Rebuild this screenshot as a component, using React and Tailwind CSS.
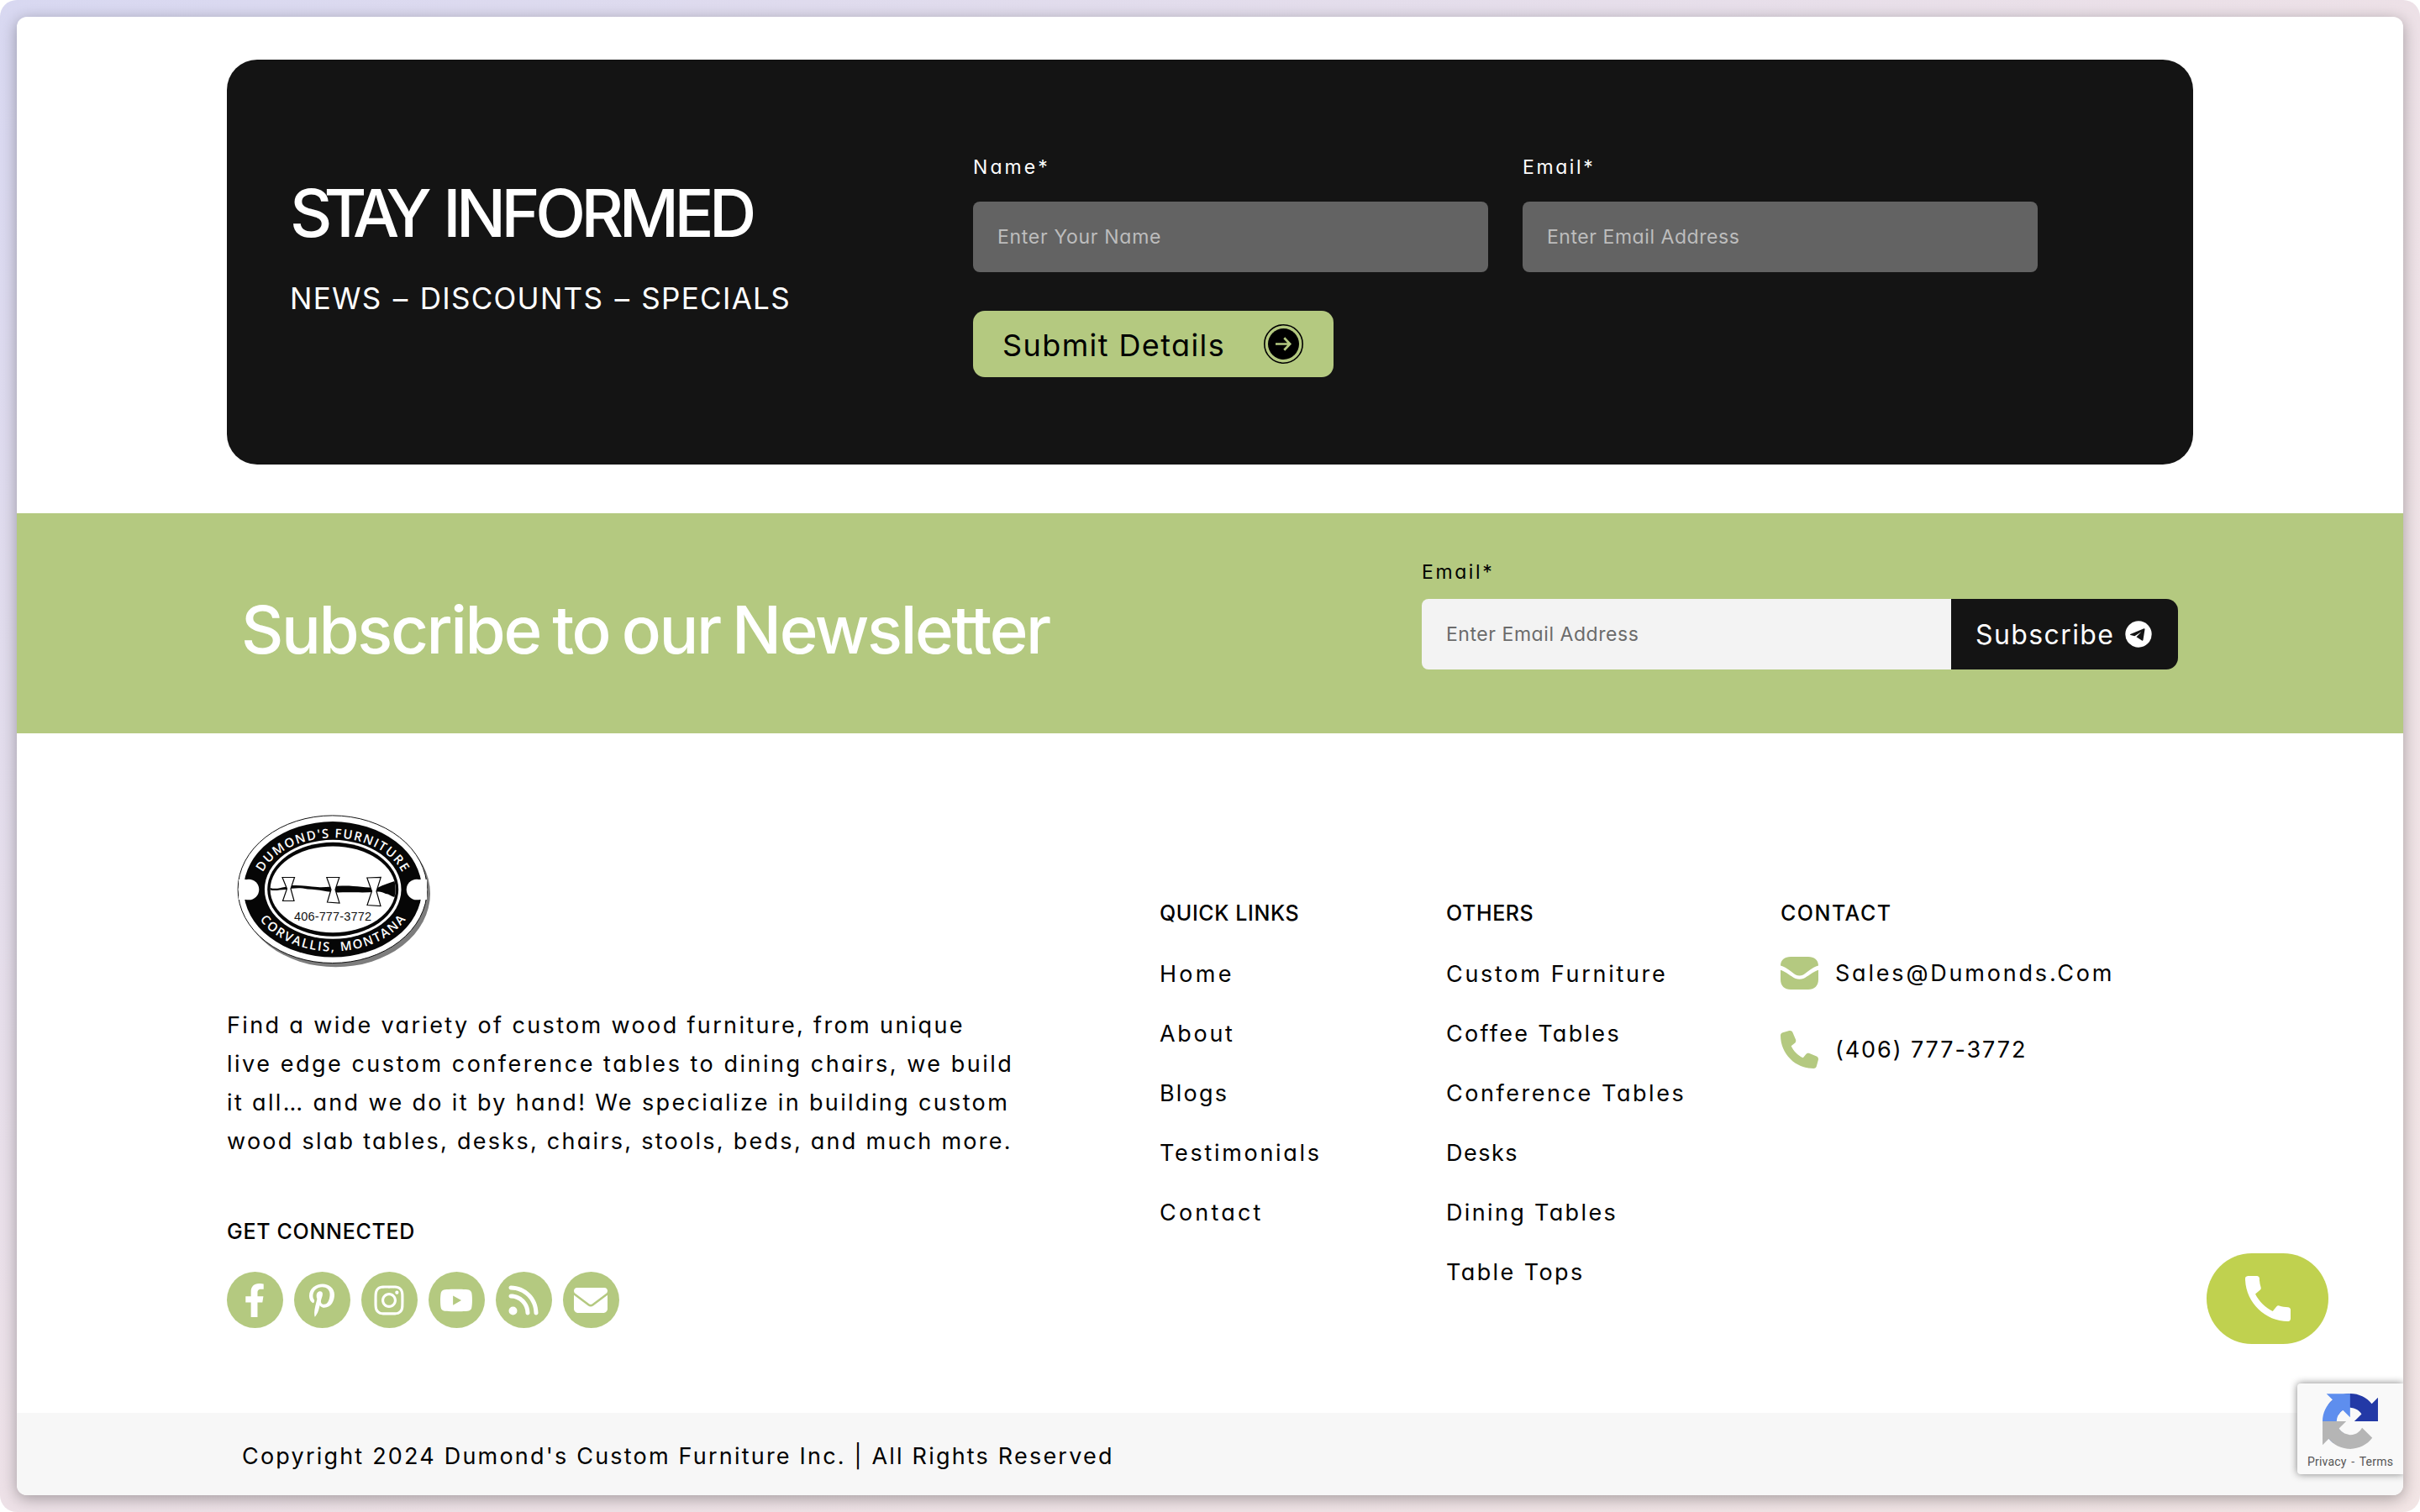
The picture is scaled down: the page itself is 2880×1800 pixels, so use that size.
import React from "react";
import {
  FaFacebookF,
  FaPinterestP,
  FaInstagram,
  FaYoutube,
} from "react-icons/fa";
import { FaRss, FaEnvelope, FaPhone } from "react-icons/fa6";
import { MdCall } from "react-icons/md";

const aboutLines = [
  ["Find a wide variety of custom wood furniture, from unique", "tracking-[2.36px]"],
  ["live edge custom conference tables to dining chairs, we build", "tracking-[2.52px]"],
  ["it all… and we do it by hand! We specialize in building custom", "tracking-[2.36px]"],
  ["wood slab tables, desks, chairs, stools, beds, and much more.", "tracking-[2.27px]"],
];

const quickLinks = [
  ["Home", "tracking-[3.3px]"],
  ["About", "tracking-[2.7px]"],
  ["Blogs", "tracking-[2.2px]"],
  ["Testimonials", "tracking-[2.7px]"],
  ["Contact", "tracking-[3.2px]"],
];

const otherLinks = [
  ["Custom Furniture", "tracking-[2.7px]"],
  ["Coffee Tables", "tracking-[2.3px]"],
  ["Conference Tables", "tracking-[2.55px]"],
  ["Desks", "tracking-[1.5px]"],
  ["Dining Tables", "tracking-[2.35px]"],
  ["Table Tops", "tracking-[2.4px]"],
];

const socials = [
  ["Facebook", FaFacebookF],
  ["Pinterest", FaPinterestP],
  ["Instagram", FaInstagram],
  ["YouTube", FaYoutube],
  ["RSS", FaRss],
  ["Email", FaEnvelope],
];

function Logo() {
  return (
    <svg viewBox="0 0 280 240" className="block h-[240px] w-[280px]" aria-label="Dumond's Furniture">
      <defs>
        <path id="arc-top" d="M50.5 104 A88 62 0 0 1 221 104" />
        <path id="arc-bottom" d="M47 152 A100 74.5 0 0 0 225 152" />
        <filter id="logo-shadow" x="-10%" y="-10%" width="120%" height="120%">
          <feGaussianBlur stdDeviation="0.7" />
        </filter>
      </defs>
      <ellipse cx="139.5" cy="123.8" rx="112.5" ry="87.5" fill="#7d7d7d" filter="url(#logo-shadow)" />
      <ellipse cx="135.7" cy="118.7" rx="112.6" ry="87.8" fill="#fff" stroke="#111" strokeWidth="1" />
      <ellipse cx="136" cy="118.8" rx="106" ry="80.7" fill="#060606" />
      <rect x="24" y="107" width="9" height="24" fill="#fff" />
      <rect x="239" y="107" width="9" height="24" fill="#fff" />
      <circle cx="36" cy="119" r="12.3" fill="#fff" />
      <circle cx="236" cy="119" r="12.3" fill="#fff" />
      <ellipse cx="136.2" cy="118.8" rx="81.3" ry="59" fill="#fff" />
      <ellipse cx="136.2" cy="118.8" rx="78" ry="56" fill="#060606" />
      <ellipse cx="136.2" cy="118.8" rx="74.6" ry="51.4" fill="#fff" />
      <path
        d="M61.5 117 C68 119 73 117 79 116 C88 112 104 115 118 116 C128 117 138 114 150 114.500 C165 114.500 176 117 189 117 C197 113 204 111 209.500 109 C211 115 211 122 209.500 128 C205 127 203 124 199 124 C195 122 192 121 187 122 C172 123 160 122 142 122.500 C130 122 120 119 106 118.500 C96 116 88 117.500 80 119 C73 119 68 121 61.500 119.500 Z"
        fill="#060606"
      />
      <g fill="#fff" stroke="#060606" strokeWidth="1.2">
        <path d="M76 104.500 H90.500 L86 118 L90 132.500 H76.500 L81.500 118 Z" />
        <path d="M128.800 104.500 H143.800 L139 119 L144 135 L129.500 134 L134 119 Z" />
        <path d="M176.800 105 L193.200 104.500 L188 121 L193 138.500 L177 137.500 L182.500 121 Z" />
      </g>
      <text x="136" y="156" textAnchor="middle" textLength="92" className="font-['Liberation_Sans'] text-[14.5px]" fill="#111">
        406-777-3772
      </text>
      <text className="font-['Open_Sans'] text-[15px] font-semibold" fill="#fff">
        <textPath href="#arc-top" startOffset="50%" textAnchor="middle" textLength="194">
          DUMOND'S FURNITURE
        </textPath>
      </text>
      <text className="font-['Open_Sans'] text-[15px] font-semibold" fill="#fff">
        <textPath href="#arc-bottom" startOffset="50%" textAnchor="middle" textLength="196">
          CORVALLIS, MONTANA
        </textPath>
      </text>
    </svg>
  );
}

function ArrowBadge() {
  return (
    <svg viewBox="0 0 47 47" className="h-[47px] w-[47px]">
      <circle cx="23.5" cy="23.5" r="22.7" fill="none" stroke="#000" strokeWidth="1.6" />
      <circle cx="23.5" cy="23.5" r="18.5" fill="#000" />
      <path d="M14 23.5 H31 M24.300 16.300 L31.200 23.500 L24.300 30.700" fill="none" stroke="#b4c980" strokeWidth="2.7" />
    </svg>
  );
}

function PlaneBadge() {
  return (
    <svg viewBox="0 0 32 32" className="h-[32px] w-[32px]">
      <circle cx="16" cy="16" r="15.700" fill="#fff" />
      <path d="M6.200 16 L22.500 9.300 Q23.700 9 23.500 10.200 L21.500 22.800 Q21.200 24.200 20 23.500 L13.500 19.300 L19.300 13.200 L11.400 18.200 L6.500 17 Q5.700 16.500 6.200 16 Z" fill="#141414" />
    </svg>
  );
}

function MailIcon() {
  return (
    <svg viewBox="0 0 45 39" className="h-[39px] w-[45px]" fill="#b4c980">
      <path d="M0 10.500 C0 4 5 0 12 0 H33 C40 0 45 4 45 10.500 C37 13 32 18.500 27 21.500 Q22.500 23.700 18 21.500 C13 18.500 8 13 0 10.500 Z" />
      <path d="M0 15.800 C7 18 12 23.500 18 26 Q22.500 27.600 27 26 C33 23.500 38 18 45 15.800 V27 C45 35 40 39 33 39 H12 C5 39 0 35 0 27 Z" />
    </svg>
  );
}

function RecaptchaMark() {
  return (
    <svg viewBox="0 0 64 64" className="h-[66px] w-[66px]">
      <path fill="#2339a6" d="M64 31.955l-.033-1.370V4.687l-7.160 7.160C50.948 4.674 42.033.093 32.050.093c-10.400 0-19.622 4.960-25.458 12.640l11.736 11.860a15.550 15.550 0 0 1 4.754-5.334c2.050-1.600 4.952-2.906 8.968-2.906.485 0 .860.057 1.135.163 4.976.393 9.288 3.140 11.828 7.124l-8.307 8.307L64 31.953" />
      <path fill="#5e8eee" d="M31.862.094l-1.370.033H4.594l7.160 7.160C4.580 13.147 0 22.060 0 32.046c0 10.400 4.960 19.622 12.640 25.458L24.500 45.768a15.550 15.550 0 0 1-5.334-4.754c-1.600-2.050-2.906-4.952-2.906-8.968 0-.485.057-.860.163-1.135.393-4.976 3.140-9.288 7.124-11.828l8.307 8.307L31.860.095" />
      <path fill="#b5b5b5" d="M.001 32.045l.033 1.370v25.898l7.160-7.160c5.860 7.173 14.774 11.754 24.760 11.754 10.400 0 19.622-4.960 25.458-12.640l-11.736-11.860a15.550 15.550 0 0 1-4.754 5.334c-2.050 1.600-4.952 2.906-8.968 2.906-.485 0-.860-.057-1.135-.163-4.976-.393-9.288-3.140-11.828-7.124l8.307-8.307c-10.522.040-22.400.066-27.295-.005" />
    </svg>
  );
}

function Field({ label, labelClass, placeholder, placeholderClass }) {
  return (
    <label className="block w-[613px]">
      <span className={"block text-[23px] leading-[30px] text-white " + labelClass}>{label}</span>
      <input
        placeholder={placeholder}
        className={"mt-[26px] block h-[84px] w-full rounded-lg bg-[#636363] px-[29px] text-[23px] placeholder:text-[#bdbdbd] " + placeholderClass}
      />
    </label>
  );
}

function LinkColumn({ title, titleClass, links, className }) {
  return (
    <nav className={className}>
      <h4 className={"text-[25px] font-medium leading-[30px] " + titleClass}>{title}</h4>
      <ul className="mt-[22px]">
        {links.map(([text, tracking]) => (
          <li key={text} className={"whitespace-nowrap text-[27px] leading-[71px] " + tracking}>{text}</li>
        ))}
      </ul>
    </nav>
  );
}

export default function App() {
  return (
    <div className="h-[1800px] w-[2880px] bg-white font-['Inter',sans-serif] text-black [font-feature-settings:'cv11']">
      <div className="h-full w-full rounded-[20px] bg-linear-to-br from-[#d8d8f1] via-[#ede1e7] to-[#f2e5e5] p-[20px]">
        <div className="relative flex h-[1760px] flex-col overflow-clip rounded-[12px] bg-white shadow-[0_4px_18px_rgba(0,0,0,0.32)]">
          <section className="mx-[250px] mt-[51px] flex h-[482px] shrink-0 rounded-[36px] bg-[#141414] text-white">
            <div className="w-[888px] pl-[75px] pt-[143px]">
              <h2 className="flex gap-[23px] text-[78px] font-medium leading-[80px]">
                <span className="tracking-[-9.8px]">STAY</span>
                <span className="tracking-[-5.4px]">INFORMED</span>
              </h2>
              <p className="mt-[36px] text-[35px] leading-[50px] tracking-[1.3px] [word-spacing:2px]">NEWS – DISCOUNTS – SPECIALS</p>
            </div>
            <div className="pt-[113px]">
              <div className="flex gap-[41px]">
                <Field label="Name*" labelClass="tracking-[3.1px]" placeholder="Enter Your Name" placeholderClass="tracking-[0.7px]" />
                <Field label="Email*" labelClass="tracking-[2.6px]" placeholder="Enter Email Address" placeholderClass="tracking-[0.55px]" />
              </div>
              <button className="mt-[46px] flex h-[79px] w-[429px] items-center justify-between rounded-[14px] bg-[#b4c980] pl-[35px] pr-[36px] text-black">
                <span className="pt-[3px] text-[36px] leading-[40px] tracking-[1.4px]">Submit Details</span>
                <ArrowBadge />
              </button>
            </div>
          </section>

          <section className="mt-[58px] flex h-[262px] shrink-0 justify-between bg-[#b4c980] pl-[267px] pr-[268px]">
            <h2 className="pt-[99px] text-[78px] font-medium leading-[80px] tracking-[-2.4px] text-white [word-spacing:-4px]">Subscribe to our Newsletter</h2>
            <div className="w-[900px] pt-[55px]">
              <div className="text-[23px] leading-[30px] tracking-[2.6px]">Email*</div>
              <div className="mt-[17px] flex h-[84px]">
                <input
                  placeholder="Enter Email Address"
                  className="w-[630px] rounded-l-lg bg-[#f3f3f3] px-[29px] text-[23px] tracking-[0.55px] placeholder:text-[#6b6b6b]"
                />
                <button className="flex w-[270px] items-center justify-between rounded-r-[14px] bg-[#141414] pl-[29px] pr-[31px] text-white">
                  <span className="pt-[2px] text-[32px] leading-[40px] tracking-[1.4px]">Subscribe</span>
                  <PlaneBadge />
                </button>
              </div>
            </div>
          </section>

          <footer className="flex h-[809px] shrink-0 pl-[250px]">
            <div className="w-[1110px]">
              <div className="-ml-[10px] mt-[67px]">
                <Logo />
              </div>
              <p className="mt-[18px] text-[27px] leading-[46px]">
                {aboutLines.map(([text, tracking]) => (
                  <span key={text} className={"block whitespace-nowrap " + tracking}>{text}</span>
                ))}
              </p>
              <h4 className="mt-[69px] text-[25px] font-medium leading-[30px] tracking-[0.7px]">GET CONNECTED</h4>
              <div className="mt-[33px] flex gap-[13px]">
                {socials.map(([name, Icon]) => (
                  <a key={name} aria-label={name} className="flex h-[67px] w-[67px] items-center justify-center rounded-full bg-[#b4c980] pr-[2px]">
                    <Icon size={40} color="#fff" />
                  </a>
                ))}
              </div>
            </div>
            <LinkColumn title="QUICK LINKS" titleClass="tracking-[0.6px]" links={quickLinks} className="w-[341px] pt-[199px]" />
            <LinkColumn title="OTHERS" titleClass="tracking-[0.6px]" links={otherLinks} className="w-[398px] pt-[199px]" />
            <div className="pt-[199px]">
              <h4 className="text-[25px] font-medium leading-[30px] tracking-[1.5px]">CONTACT</h4>
              <div className="mt-[34px] flex h-[45px] items-center gap-[20px]">
                <MailIcon />
                <span className="text-[27px] leading-[45px] tracking-[2.8px]">Sales@Dumonds.Com</span>
              </div>
              <div className="mt-[46px] flex h-[45px] items-center gap-[20px]">
                <FaPhone size={45} color="#b4c980" />
                <span className="text-[27px] leading-[45px] tracking-[1.9px]">(406) 777-3772</span>
              </div>
            </div>
          </footer>

          <div className="flex flex-1 items-center bg-[#f7f7f7] pl-[268px] pt-[6px]">
            <span className="whitespace-nowrap text-[27px] tracking-[2.2px]">
              Copyright 2024 Dumond's Custom Furniture Inc. | All Rights Reserved
            </span>
          </div>

          <button aria-label="Call" className="absolute right-[89px] top-[1472px] flex h-[108px] w-[145px] items-center justify-center rounded-full bg-[#c0d14f]">
            <MdCall size={72} color="#fff" />
          </button>

          <div className="absolute right-0 top-[1627px] flex h-[108px] w-[126px] flex-col items-center rounded-l-[4px] bg-[#f9f9f9] pt-[12px] shadow-[0_0_10px_#808080]">
            <RecaptchaMark />
            <div className="mt-[5px] whitespace-pre font-['Roboto'] text-[14px] leading-[20px] tracking-[0.2px] text-[#555] [word-spacing:2px]">Privacy - Terms</div>
          </div>
        </div>
      </div>
    </div>
  );
}
